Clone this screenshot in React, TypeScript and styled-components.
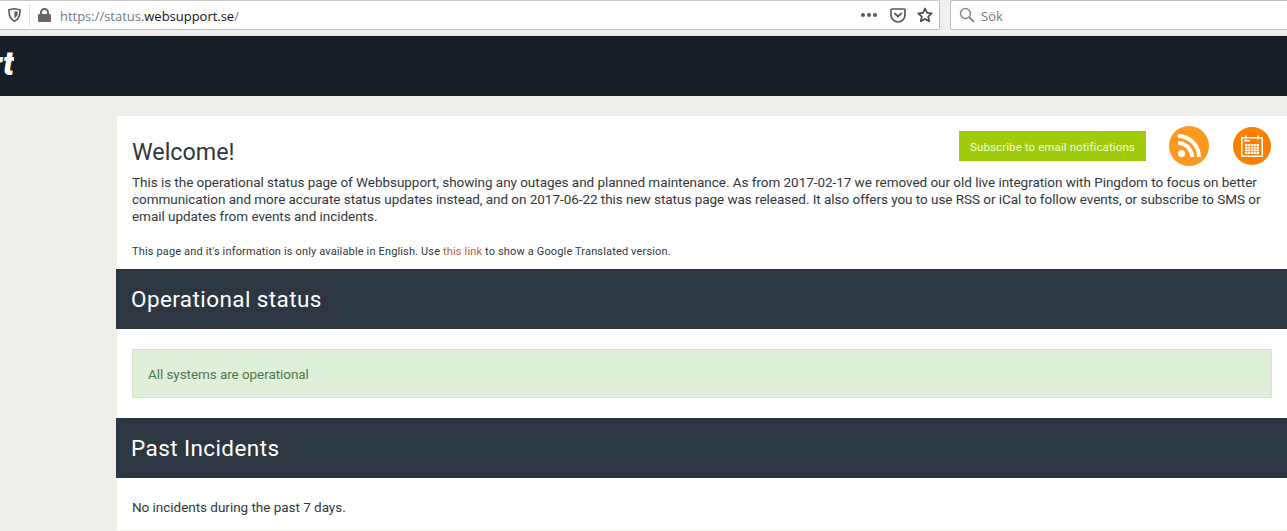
import React from 'react';
import styled, { createGlobalStyle } from 'styled-components';

const Global = createGlobalStyle`
  html, body { margin: 0; padding: 0; height: 531px; overflow: hidden; background: #efeee9; }
  * { box-sizing: border-box; }
  body { font-family: Roboto, "Liberation Sans", sans-serif; color: #32373c; }
`;
const Page = styled.div`width: 1287px; height: 531px; overflow: hidden; display: flex; flex-direction: column;`;
const Toolbar = styled.div`height: 36px; flex: none; background: #f0f0f1; display: flex; gap: 10px; align-items: flex-start; border-bottom: 1px solid #e4e4e4; font-family: "Open Sans", sans-serif;`;
const UrlBar = styled.div`width: 940px; height: 30px; background: #fff; border: 1px solid #bdbdbd; border-top-color: #c8c8c8; border-left: none; border-radius: 0 2px 2px 0; display: flex; align-items: center; padding-left: 8px;`;
const ShieldSlot = styled.div`width: 22px; height: 22px; display: flex; align-items: center; border-right: 1px solid #e4e4e4; margin-right: 8px;`;
const Url = styled.div`font-size: 13px; color: #6f7a85; margin: 2px 0 0 9px; flex: 1; white-space: nowrap; letter-spacing: -.02px;`;
const UrlHost = styled.span`color: #14141a;`;
const ToolIcons = styled.div`display: flex; align-items: center; gap: 11px; padding-right: 6px;`;
const Dots = styled.div`display: flex; gap: 2px; margin-right: 2px;`;
const Dot = styled.i`width: 4px; height: 4px; border-radius: 50%; background: #5a5a5a; display: block;`;
const SearchBar = styled.div`flex: 1; height: 30px; background: #fff; border: 1px solid #bdbdbd; border-right: none; border-radius: 2px 0 0 2px; display: flex; align-items: center; padding-left: 8px; gap: 6px; font-size: 13px; color: #777;`;
const SearchLabel = styled.span`margin-top: 2px;`;
const Header = styled.div`height: 60px; background: #171e26; flex: none; overflow: hidden; display: flex; align-items: center;`;
const Logo = styled.div`font-family: Roboto, "Liberation Sans", sans-serif; font-weight: 900; font-style: italic; font-size: 33px; line-height: 1; color: #fff; width: 14px; overflow: hidden; display: flex; justify-content: flex-end; white-space: nowrap; padding-bottom: 5px;`;
const Main = styled.main`margin: 20px 0 1px 116px; flex: 1; background: #fff; display: flex; flex-direction: column;`;
const Intro = styled.section`position: relative; padding: 23px 16px 0 15px; height: 153px; border-left: 1px solid #efeee9;`;
const Title = styled.h1`margin: 0; font-size: 23.3px; font-weight: 400; line-height: 26px; color: #32373c;`;
const Body = styled.p`margin: 9px 0 0; font-size: 13.5px; line-height: 17px; letter-spacing: -.04px; width: 1140px;`;
const Small = styled.p`margin: 20px 0 0; font-size: 11px; line-height: 14px; letter-spacing: .15px;`;
const Link = styled.a`color: #c9573a;`;
const Actions = styled.div`position: absolute; top: 10px; right: 16px; display: flex; align-items: center;`;
const Subscribe = styled.a`width: 187px; height: 30px; padding-top: 2px; background: #9fcc0a; color: #f4f9dc; font-size: 11.5px; display: flex; align-items: center; justify-content: center; margin-right: 23px; letter-spacing: .1px;`;
const Round = styled.div<{ $size: number; $bg: string; $ml?: number }>`
  width: ${p => p.$size}px; height: ${p => p.$size}px; border-radius: 50%; background: ${p => p.$bg};
  margin-left: ${p => p.$ml ?? 0}px; display: flex; align-items: center; justify-content: center;
`;
const Band = styled.h2`margin: 0; height: 60px; background: #2c3742; color: #fff; font-size: 22.5px; font-weight: 400; line-height: 60px; padding-left: 15px; letter-spacing: .41px;`;
const AlertWrap = styled.div`padding: 20px 15px 20px 15px; border-left: 1px solid #efeee9;`;
const Alert = styled.div`height: 49px; background: #dfefd9; border: 1px solid #d4e6c8; color: #4a7c47; font-size: 13.5px; display: flex; align-items: center; padding-left: 15px; letter-spacing: -.07px;`;
const NoIncidents = styled.p`margin: 0; flex: 1; padding: 21px 0 0 15px; font-size: 13.5px; letter-spacing: -.03px; border-left: 1px solid #efeee9;`;

export default function App() {
  return (
    <Page>
      <Global />
      <Toolbar>
        <UrlBar>
          <ShieldSlot>
            <svg width="13" height="14" viewBox="0 0 13 14"><path d="M1 1.8 6.5 .8 12 1.8c.2 5-1.5 9.600-5.500 11.400C2.500 11.400.8 6.800 1 1.800Z" fill="none" stroke="#5a5a5a" strokeWidth="1.600"/><path d="M6.500 3.200 9.800 3.800C9.800 6.800 8.800 9.300 6.500 10.600Z" fill="#5a5a5a"/></svg>
          </ShieldSlot>
          <svg width="13" height="14" viewBox="0 0 13 14"><path d="M2 6V4.500a4.500 4.500 0 0 1 9 0V6h1a1 1 0 0 1 1 1v6a1 1 0 0 1-1 1H1a1 1 0 0 1-1-1V7a1 1 0 0 1 1-1Zm2 0h5V4.500a2.500 2.500 0 0 0-5 0Z" fill="#666"/></svg>
          <Url>https://status.<UrlHost>websupport.se</UrlHost>/</Url>
          <ToolIcons>
            <Dots><Dot /><Dot /><Dot /></Dots>
            <svg width="16" height="15" viewBox="0 0 16 15"><path d="M2 1h12a1 1 0 0 1 1 1v5a7 7 0 0 1-14 0V2a1 1 0 0 1 1-1Z" fill="none" stroke="#5a5a5a" strokeWidth="1.700"/><path d="M4.800 5.500 8 8.500l3.200-3" fill="none" stroke="#5a5a5a" strokeWidth="1.800" strokeLinecap="round"/></svg>
            <svg width="16" height="16" viewBox="0 0 16 16"><path d="M8 1.500l2 4.400 4.700.5-3.500 3.200 1 4.700L8 11.900l-4.200 2.400 1-4.700L1.300 6.400 6 5.900Z" fill="none" stroke="#4a4a4a" strokeWidth="1.700" strokeLinejoin="round"/></svg>
          </ToolIcons>
        </UrlBar>
        <SearchBar>
          <svg width="16" height="16" viewBox="0 0 16 16"><circle cx="6.500" cy="6.500" r="5" fill="none" stroke="#8a8a8a" strokeWidth="1.500"/><path d="M10.200 10.200 15 15" stroke="#8a8a8a" strokeWidth="2"/></svg>
          <SearchLabel>Sök</SearchLabel>
        </SearchBar>
      </Toolbar>
      <Header><Logo>rt</Logo></Header>
      <Main>
        <Intro>
          <Title>Welcome!</Title>
          <Body>This is the operational status page of Webbsupport, showing any outages and planned maintenance. As from 2017-02-17 we removed our old live integration with Pingdom to focus on better communication and more accurate status updates instead, and on 2017-06-22 this new status page was released. It also offers you to use RSS or iCal to follow events, or subscribe to SMS or email updates from events and incidents.</Body>
          <Small>This page and it's information is only available in English. Use <Link>this link</Link> to show a Google Translated version.</Small>
          <Actions>
            <Subscribe>Subscribe to email notifications</Subscribe>
            <Round $size={40} $bg="#fd9a1d">
              <svg width="24" height="24" viewBox="0 0 24 24"><circle cx="4.500" cy="19.500" r="3.500" fill="#fff"/><path d="M1 9a14 14 0 0 1 14 14" fill="none" stroke="#fff" strokeWidth="4"/><path d="M1 2a21 21 0 0 1 21 21" fill="none" stroke="#fff" strokeWidth="4"/></svg>
            </Round>
            <Round $size={38} $bg="#fd7f00" $ml={24}>
              <svg width="22" height="22" viewBox="0 0 22 22"><rect x=".75" y="2.750" width="20.500" height="18.500" fill="none" stroke="#fff" strokeWidth="1.500"/><path d="M5 .5v4M17 .5v4" stroke="#fff" strokeWidth="1.500"/><rect x="3" y="5" width="6" height="1.500" fill="#fff"/><rect x="4" y="9" width="14" height="10" fill="#fff"/><path d="M4 11.500h14M4 14h14M4 16.500h14M6.800 9v10M9.600 9v10M12.400 9v10M15.200 9v10" stroke="#fd9a3c" strokeWidth=".8"/></svg>
            </Round>
          </Actions>
        </Intro>
        <Band>Operational status</Band>
        <AlertWrap><Alert>All systems are operational</Alert></AlertWrap>
        <Band>Past Incidents</Band>
        <NoIncidents>No incidents during the past 7 days.</NoIncidents>
      </Main>
    </Page>
  );
}
